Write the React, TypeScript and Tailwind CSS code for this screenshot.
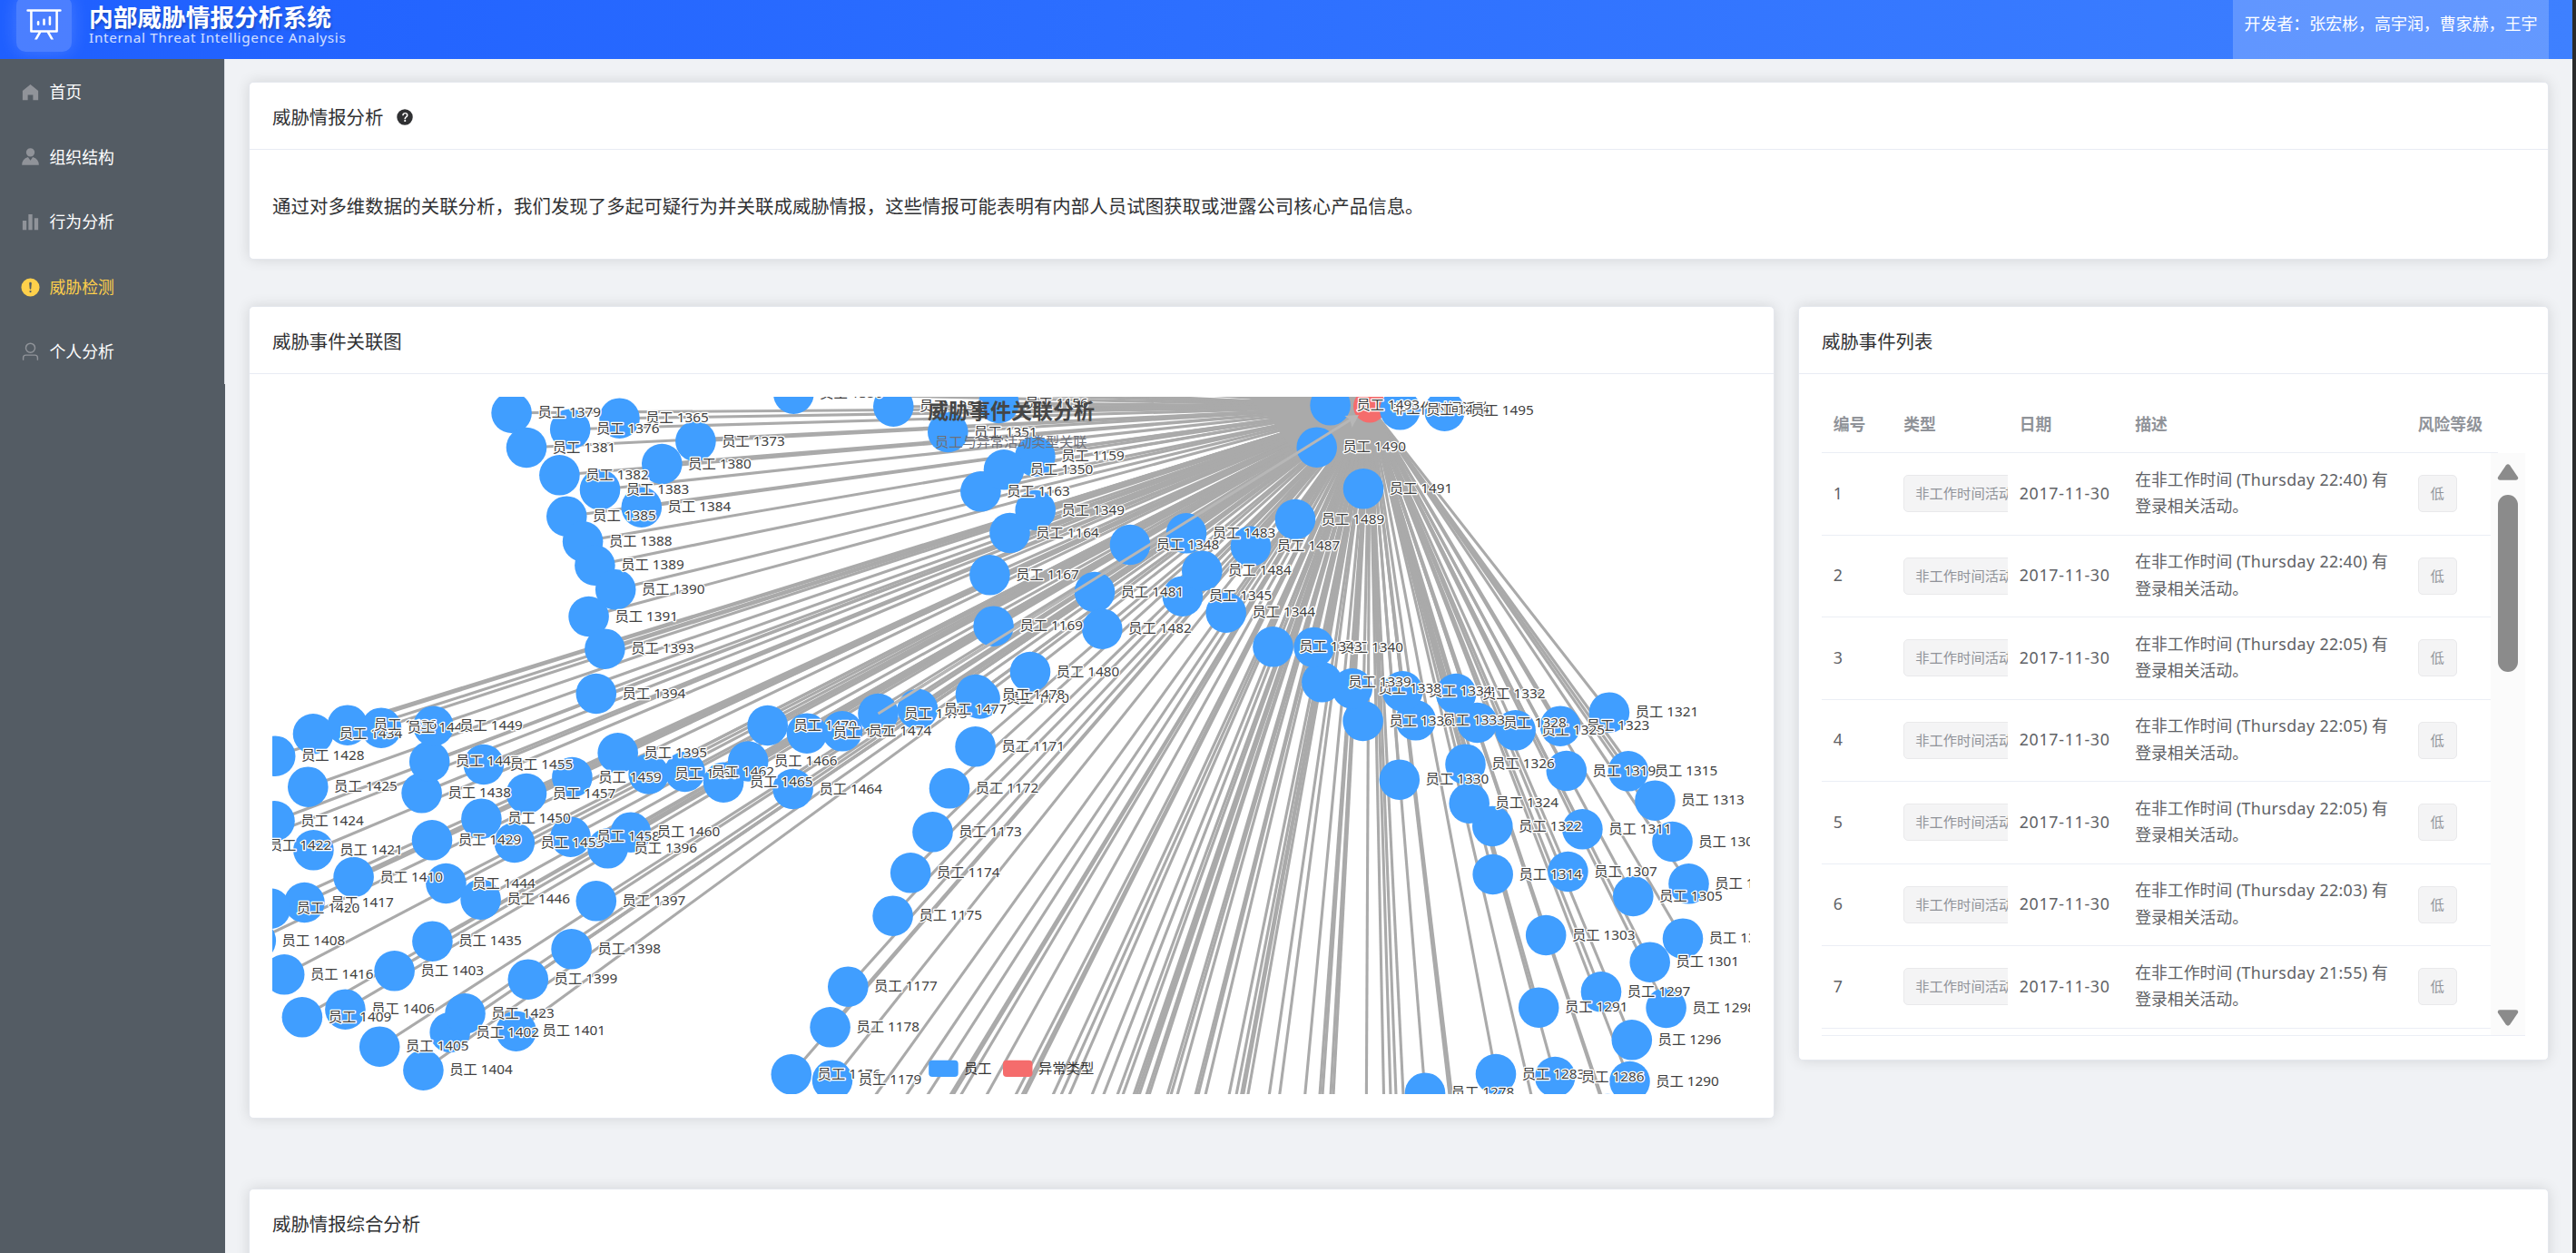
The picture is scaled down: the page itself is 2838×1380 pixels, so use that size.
import React from "react";

type GraphNode = [id: string, x: number, y: number];

const CHART = { x: 300, y: 437, w: 1628, h: 768 };
const HUB = { x: 1509, y: 447.5 };

const nodes: GraphNode[] = [
  ["1156", 1100.4, 444], ["1159", 1140.4, 502.7], ["1163", 1080.4, 541.3], ["1164", 1112.5, 587],
  ["1167", 1090.4, 633.3], ["1169", 1094.6, 689.7], ["1170", 1079.6, 769.5], ["1171", 1074.6, 822.3],
  ["1172", 1046, 868.3], ["1173", 1027.5, 916.3], ["1174", 1003.2, 961.3], ["1175", 983.6, 1008.7],
  ["1176", 871.8, 1183.3], ["1177", 934.3, 1086.7], ["1178", 914.6, 1131.3], ["1179", 917, 1189.7],
  ["1278", 1570, 1203.7], ["1283", 1648, 1183], ["1286", 1713.2, 1186], ["1288", 1771, 1227],
  ["1290", 1795.5, 1191], ["1291", 1695.2, 1109.7], ["1296", 1797.8, 1145.3], ["1297", 1764, 1092.3],
  ["1298", 1835.6, 1110], ["1301", 1817.7, 1059.7], ["1302", 1854, 1033.7], ["1303", 1703.2, 1030],
  ["1304", 1860.5, 973.3], ["1305", 1799.3, 987], ["1307", 1727.4, 960], ["1308", 1842.5, 927],
  ["1311", 1743.4, 913.3], ["1313", 1823.4, 881.7], ["1314", 1644.7, 963], ["1315", 1793.9, 849.3],
  ["1319", 1725.8, 849], ["1321", 1772.9, 784.7], ["1322", 1644.3, 910], ["1323", 1719, 799.7],
  ["1324", 1618.7, 884.7], ["1325", 1669.6, 804.3], ["1326", 1614.5, 841.7], ["1328", 1627.5, 796],
  ["1330", 1541.8, 858.7], ["1332", 1604.1, 764], ["1333", 1559.7, 793.3], ["1334", 1545.2, 761.3],
  ["1336", 1501.6, 794], ["1338", 1489.7, 758.3], ["1339", 1456.4, 751.3], ["1340", 1447.6, 713],
  ["1343", 1402.5, 712.3], ["1344", 1350.7, 674.7], ["1345", 1302.9, 656.7], ["1348", 1245, 600],
  ["1349", 1140.7, 562], ["1350", 1106, 517.3], ["1351", 1044.3, 476], ["1352", 984.3, 447.7],
  ["1355", 1143.2, 414], ["1356", 874.3, 433.7], ["1365", 682.5, 460.7], ["1373", 766.4, 486],
  ["1376", 628.2, 472.7], ["1379", 563.6, 454.7], ["1380", 729.3, 511], ["1381", 580, 493],
  ["1382", 616.4, 523.3], ["1383", 661, 539.3], ["1384", 706.8, 558.7], ["1385", 624.3, 568.7],
  ["1388", 642.1, 596.3], ["1389", 655.4, 622.7], ["1390", 678.2, 649.3], ["1391", 648.6, 679],
  ["1393", 666.4, 714.7], ["1394", 656.8, 764], ["1395", 680.7, 829.3], ["1396", 669.6, 934.3],
  ["1397", 656.8, 992.3], ["1398", 629.6, 1045.3], ["1399", 581.8, 1078.7], ["1401", 568.6, 1135.7],
  ["1402", 495.7, 1137], ["1403", 434.6, 1069.3], ["1404", 466.4, 1178.7], ["1405", 418.2, 1152.7],
  ["1406", 380.4, 1111.7], ["1408", 281.8, 1036], ["1409", 332.9, 1120.3], ["1410", 389.6, 966],
  ["1416", 313.2, 1073.3], ["1417", 335.4, 994], ["1420", 297.9, 1000.7], ["1421", 345.4, 936.3],
  ["1422", 267, 931], ["1423", 512.5, 1116.3], ["1424", 302.5, 904.3], ["1425", 339.3, 866.7],
  ["1428", 303.2, 832.7], ["1429", 476, 925.3], ["1434", 345, 808.3], ["1435", 476.4, 1036.7],
  ["1436", 382.9, 798.7], ["1438", 464.6, 873.3], ["1443", 420, 801.7], ["1444", 491.4, 973],
  ["1446", 529.6, 990.7], ["1447", 473.2, 838.7], ["1449", 477.5, 799.7], ["1450", 530.4, 901.7],
  ["1453", 566.8, 928], ["1455", 532.9, 842], ["1457", 580, 874], ["1458", 628.6, 921.7],
  ["1459", 630.4, 856], ["1460", 695, 916.7], ["1461", 714.6, 852.5], ["1462", 754.6, 850],
  ["1464", 873.6, 869], ["1465", 797.1, 861.7], ["1466", 824.2, 838.5], ["1470", 845.7, 799],
  ["1471", 889, 807.7], ["1474", 927.9, 805.3], ["1475", 967.5, 786], ["1477", 1011, 781],
  ["1478", 1075, 765], ["1480", 1135, 740], ["1481", 1206, 652], ["1482", 1214.3, 692.7],
  ["1483", 1307, 587.3], ["1484", 1324.3, 628.7], ["1487", 1378, 601.7], ["1489", 1427, 572],
  ["1490", 1450.7, 492.7], ["1491", 1502, 538.3], ["1493", 1465.6, 446.3], ["1494", 1542.5, 451.3],
  ["1495", 1591.5, 452.7],
];

/* Where the edges of nodes below the visible canvas cross its bottom side. */
const bottomEdges = [
  964.6, 998.6, 1021.8, 1047, 1050, 1058.6, 1087, 1119, 1126, 1129, 1160, 1169, 1178, 1203, 1215.7,
  1231, 1237, 1249, 1252, 1255, 1263, 1266, 1286, 1290, 1297, 1317, 1320, 1328, 1354, 1362, 1367.5,
  1369.6, 1374.8, 1398.3, 1409.7, 1437.7, 1454, 1457, 1466, 1469, 1505.4, 1524.5, 1532, 1538, 1546,
  1597, 1599.5, 1687, 1762.6,
];

/* Ends of edges that leave the canvas through its top side. */
const topEdges: [number, number][] = [
  [700, 421], [810, 418], [900, 420], [960, 409], [1000, 402], [1050, 398], [1080, 388], [1130, 392],
  [1150, 380], [1180, 385], [1200, 372], [1230, 380], [1250, 360], [1270, 368], [1290, 350],
  [1310, 358], [1330, 340], [1350, 345], [1370, 330], [1390, 330], [1400, 310], [1420, 310],
  [1430, 290], [1445, 280], [1455, 260], [1468, 260], [1476, 230], [1484, 210], [1496, 200],
];

const font = "[font-family:'Noto_Sans','Noto_Sans_CJK_SC',sans-serif]";

function NodeLabel({ x, y, children }: { x: number; y: number; children: string }) {
  return (
    <text
      x={x}
      y={y + 5.6}
      fontSize="15.3"
      fill="#404040"
      stroke="#fff"
      strokeWidth="2.6"
      strokeLinejoin="round"
      paintOrder="stroke"
    >
      {children}
    </text>
  );
}

function RelationGraph() {
  return (
    <svg
      className="block h-[768px] w-[1628px]"
      viewBox={`${CHART.x} ${CHART.y} ${CHART.w} ${CHART.h}`}
    >
      <g stroke="#aaa" strokeWidth="3.1">
        {nodes.map(([id, x, y]) => (
          <line key={id} x1={x} y1={y} x2={HUB.x} y2={HUB.y} />
        ))}
        {bottomEdges.map((x) => (
          <line key={x} x1={x} y1={1206} x2={HUB.x} y2={HUB.y} />
        ))}
        {topEdges.map(([x, y]) => (
          <line key={x} x1={x} y1={y} x2={HUB.x} y2={HUB.y} />
        ))}
      </g>
      <path d="M1375 437H1509L1530 484L1500 500H1470L1420 490L1400 462Z" fill="#aaa" />
      <circle cx={HUB.x} cy={HUB.y} r="18" fill="#f56c6c" />
      <g fill="#409eff">
        {nodes.map(([id, x, y]) => (
          <circle key={id} cx={x} cy={y} r="22.3" />
        ))}
      </g>
      <line x1="967.5" y1="786" x2="1490" y2="461" stroke="#b7b7b7" strokeWidth="3" />
      <path d="M1497 457L1481.500 458L1487.500 462.500L1489.500 471Z" fill="#b7b7b7" />
      <NodeLabel x={1534} y={449}>非工作时间活动</NodeLabel>
      {nodes.map(([id, x, y]) => (
        <NodeLabel key={id} x={x + 28.8} y={y - 1}>{`员工 ${id}`}</NodeLabel>
      ))}
      <text x="1022" y="461" fontSize="23" fontWeight="700" fill="#464646">
        威胁事件关联分析
      </text>
      <text x="1030" y="491.500" fontSize="15.3" fill="#6e7079" letterSpacing="-0.08">
        员工与异常活动类型关联
      </text>
      <rect x="1023.2" y="1167.700" width="32.5" height="18.300" rx="4" fill="#409eff" />
      <text x="1062" y="1182" fontSize="15.3" fill="#333">员工</text>
      <rect x="1105" y="1167.700" width="32.5" height="18.300" rx="4" fill="#f56c6c" />
      <text x="1144" y="1182" fontSize="15.3" fill="#333">异常类型</text>
    </svg>
  );
}

const icons = {
  home: "M512 128 128 447.936V896h255.936V640H640v256h255.936V447.936z",
  avatar:
    "M628.736 528.896A416 416 0 0 1 928 928H96a415.872 415.872 0 0 1 299.264-399.104L512 704zM720 304a208 208 0 1 1-416 0 208 208 0 0 1 416 0",
  histogram: "M416 896V128h192v768zm-288 0V448h192v448zm576 0V320h192v576z",
  warning:
    "M512 64a448 448 0 1 1 0 896 448 448 0 0 1 0-896m0 192a58.432 58.432 0 0 0-58.24 63.744l23.36 256.384a35.072 35.072 0 0 0 69.76 0l23.296-256.384A58.432 58.432 0 0 0 512 256m0 512a51.2 51.2 0 1 0 0-102.4 51.2 51.2 0 0 0 0 102.4",
  user: "M512 512a192 192 0 1 0 0-384 192 192 0 0 0 0 384m0 64a256 256 0 1 1 0-512 256 256 0 0 1 0 512m320 320v-96a96 96 0 0 0-96-96H288a96 96 0 0 0-96 96v96a32 32 0 1 1-64 0v-96a160 160 0 0 1 160-160h448a160 160 0 0 1 160 160v96a32 32 0 1 1-64 0",
  question:
    "M512 64a448 448 0 1 1 0 896 448 448 0 0 1 0-896m23.744 191.488c-52.096 0-92.928 14.784-123.2 44.352-30.976 29.568-45.76 70.4-45.76 122.496h80.256c0-29.568 5.632-52.8 17.6-68.992 13.376-19.712 35.2-28.864 66.176-28.864 23.936 0 42.944 6.336 56.32 19.712 12.672 13.376 19.712 31.68 19.712 54.912 0 17.6-6.336 34.496-19.008 49.984l-8.448 9.856c-45.76 40.832-73.216 70.4-82.368 89.408-9.856 19.008-14.08 42.24-14.08 68.992v9.856h80.96v-9.856c0-16.896 3.52-31.68 10.56-45.76 6.336-12.672 15.488-24.64 28.16-35.2 33.792-29.568 54.208-48.576 60.544-55.616 16.896-22.528 26.048-51.392 26.048-86.592 0-42.944-14.08-76.736-42.24-101.376-28.16-25.344-65.472-37.312-111.232-37.312m-12.672 406.208a54.272 54.272 0 0 0-38.72 14.784 49.408 49.408 0 0 0-15.488 38.016c0 15.488 4.928 28.16 15.488 38.016A54.848 54.848 0 0 0 523.072 768c15.488 0 28.16-4.928 38.72-14.784a51.52 51.52 0 0 0 16.192-38.72 51.968 51.968 0 0 0-15.488-38.016 55.936 55.936 0 0 0-39.424-14.784",
  board:
    "M665.216 768l110.848 192h-73.856L591.36 768H433.024L322.176 960H248.32l110.848-192H160a32 32 0 0 1-32-32V192H64a32 32 0 0 1 0-64h896a32 32 0 1 1 0 64h-64v544a32 32 0 0 1-32 32zM832 192H192v512h640zM352 448a32 32 0 0 1 32 32v64a32 32 0 0 1-64 0v-64a32 32 0 0 1 32-32m160-64a32 32 0 0 1 32 32v128a32 32 0 0 1-64 0V416a32 32 0 0 1 32-32m160-64a32 32 0 0 1 32 32v192a32 32 0 1 1-64 0V352a32 32 0 0 1 32-32",
};

function Icon({ name, className }: { name: keyof typeof icons; className: string }) {
  return (
    <svg viewBox="0 0 1024 1024" fill="currentColor" className={className}>
      <path d={icons[name]} />
    </svg>
  );
}

const menu: { icon: keyof typeof icons; label: string; active?: boolean }[] = [
  { icon: "home", label: "首页" },
  { icon: "avatar", label: "组织结构" },
  { icon: "histogram", label: "行为分析" },
  { icon: "warning", label: "威胁检测", active: true },
  { icon: "user", label: "个人分析" },
];

const times = ["22:40", "22:40", "22:05", "22:05", "22:05", "22:03", "21:55"];

function Card({
  title,
  className,
  children,
}: {
  title: React.ReactNode;
  className: string;
  children?: React.ReactNode;
}) {
  return (
    <section
      className={`flex flex-col overflow-hidden rounded-[5px] border border-[#e4e7ed] bg-white shadow-[0_0_15px_rgba(0,0,0,0.12)] ${className}`}
    >
      <h2 className="flex h-[74px] shrink-0 items-center border-b border-[#e8ebf3] px-[25px] pt-[3px] text-[20.4px] leading-none text-[#303133]">
        {title}
      </h2>
      {children}
    </section>
  );
}

const cols = "grid grid-cols-[77.500px_127.500px_127.500px_311.500px_93px]";

function EventTable() {
  return (
    <div className="mx-[25px] mt-[25px] flex h-[704px] flex-col border-b border-[#ebeef5] text-[17.85px]">
      <div className={`${cols} h-[62px] w-[745px] shrink-0 items-center border-b border-[#ebeef5] font-bold text-[#909399]`}>
        {["编号", "类型", "日期", "描述", "风险等级"].map((h) => (
          <div key={h} className="whitespace-nowrap pl-[12.700px]">{h}</div>
        ))}
      </div>
      <div className="flex min-h-0 flex-1">
        <div className="w-[737px] shrink-0 overflow-hidden text-[#606266]">
          {times.map((t, i) => (
            <div key={i} className={`${cols} h-[90.500px] items-center border-b border-[#ebeef5]`}>
              <div className="-mt-px pl-[12.700px]">{i + 1}</div>
              <div className="overflow-hidden pl-[12.700px]">
                <span className="flex h-[41px] w-[133px] items-center whitespace-nowrap rounded-[5px] border border-[#e9e9eb] bg-[#f4f4f5] pl-3 text-[15.3px] text-[#909399]">
                  非工作时间活动
                </span>
              </div>
              <div className="-mt-px whitespace-nowrap pl-[12.700px] tracking-[0.68px]">2017-11-30</div>
              <div className="-mt-px whitespace-nowrap pl-[12.700px] leading-[29.300px]">
                在非工作时间 <span className="tracking-[0.35px]">(Thursday {t})</span> 有
                <br />
                登录相关活动。
              </div>
              <div className="pl-[12.700px]">
                <span className="flex h-[41px] w-[43px] items-center justify-center rounded-[5px] border border-[#e9e9eb] bg-[#f4f4f5] text-[15.3px] text-[#909399]">
                  低
                </span>
              </div>
            </div>
          ))}
        </div>
        <div className="flex w-[38px] flex-col items-center bg-[#fbfbfb] pt-3 text-[#8b8b8b]">
          <svg viewBox="0 0 24 18" className="h-[18px] w-6" fill="currentColor">
            <path d="M9.800 1.400Q12-.8 14.200 1.400L23 14.500Q24 17.500 21 17.800H3Q0 17.500 1 14.500Z" />
          </svg>
          <div className="mt-4 h-[195px] w-[22.500px] rounded-full bg-[#8b8b8b]" />
          <svg viewBox="0 0 24 18" className="mb-[10px] mt-auto h-[18px] w-6 rotate-180" fill="currentColor">
            <path d="M9.800 1.400Q12-.8 14.200 1.400L23 14.500Q24 17.500 21 17.800H3Q0 17.500 1 14.500Z" />
          </svg>
        </div>
      </div>
    </div>
  );
}

export default function App() {
  return (
    <div className={`flex h-[1380px] w-[2838px] overflow-hidden bg-[#2b2b2b] ${font}`}>
      <div className="flex h-full w-[2834px] flex-col bg-[#f0f2f5]">
        <header className="flex h-[65px] shrink-0 items-center overflow-hidden bg-linear-to-r from-[#1f5fff] to-[#3e80ff] pl-[18px] pr-[26px] text-white">
          <div className="-mt-3 flex size-[61px] shrink-0 items-center justify-center rounded-[10px] bg-white/20 shadow-[0_0_19px_rgba(255,255,255,0.18)]">
            <Icon name="board" className="-mt-0.5 size-[41px]" />
          </div>
          <div className="ml-[19px] flex h-full flex-col">
            <h1 className="mt-[5px] text-[26.700px] font-bold leading-[28px] [text-shadow:1px_2px_3px_rgba(0,0,0,0.25)]">
              内部威胁情报分析系统
            </h1>
            <p className="-mt-px whitespace-nowrap text-[15.3px] leading-[18px] tracking-[0.69px] text-white/80">
              Internal Threat Intelligence Analysis
            </p>
          </div>
          <div className="ml-auto flex h-full w-[348px] justify-center whitespace-nowrap bg-white/20 pt-[14px] text-[17.950px] leading-6 text-white">
            开发者：张宏彬，高宇润，曹家赫，王宇
          </div>
        </header>
        <div className="flex min-h-0 flex-1">
          <nav className="w-[248px] shrink-0 bg-[#545c64]">
            <ul className="h-[358px] border-r border-[#dcdfe6]">
              {menu.map((m) => (
                <li
                  key={m.label}
                  className={`flex h-[71.600px] items-center pl-[21.500px] pt-px text-[17.850px] ${m.active ? "text-[#ffd04b]" : "text-white"}`}
                >
                  <Icon
                    name={m.icon}
                    className={`size-[23px] ${m.active ? "text-[#ffd04b]" : "text-[#909399]"}`}
                  />
                  <span className="ml-[10px]">{m.label}</span>
                </li>
              ))}
            </ul>
          </nav>
          <main className="flex min-w-0 flex-1 flex-col pl-[26px] pr-[26px] pt-[25px]">
            <Card
              className="h-[196px] shrink-0"
              title={
                <>
                  威胁情报分析
                  <Icon name="question" className="ml-[14px] size-5" />
                </>
              }
            >
              <p className="px-[25px] pt-[46px] text-[20.4px] leading-[32px] tracking-[0.07px] text-[#303133]">
                通过对多维数据的关联分析，我们发现了多起可疑行为并关联成威胁情报，这些情报可能表明有内部人员试图获取或泄露公司核心产品信息。
              </p>
            </Card>
            <div className="mt-[51px] flex h-[895px] shrink-0 items-start justify-between">
              <Card className="h-[895px] w-[1681px]" title="威胁事件关联图">
                <div className="px-[25px] pt-[25px]">
                  <RelationGraph />
                </div>
              </Card>
              <Card className="h-[831px] w-[827px]" title="威胁事件列表">
                <EventTable />
              </Card>
            </div>
            <Card className="mt-[77px] h-[400px] shrink-0" title="威胁情报综合分析" />
          </main>
        </div>
      </div>
    </div>
  );
}
